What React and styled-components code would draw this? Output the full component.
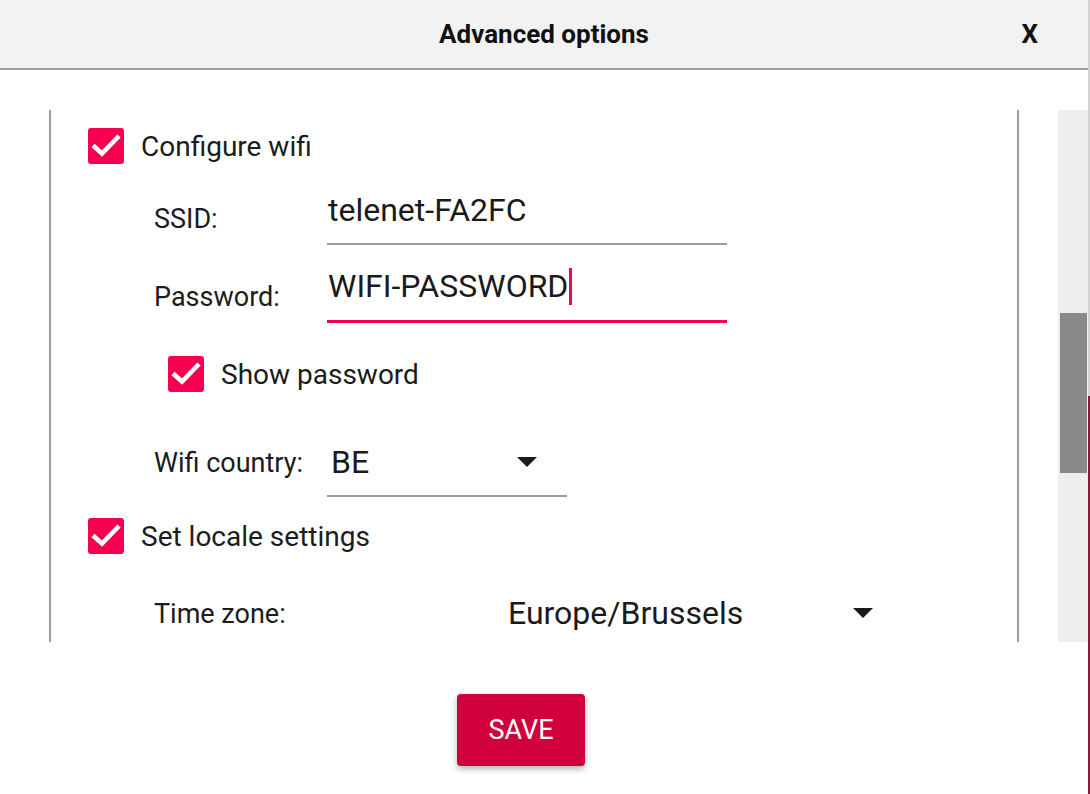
import React from "react";
import styled, { createGlobalStyle } from "styled-components";

const GlobalStyle = createGlobalStyle`
  html, body {
    margin: 0;
    padding: 0;
    background: #ffffff;
  }
  body {
    font-family: Roboto, "Noto Sans", sans-serif;
    color: #1c1c1c;
  }
`;

const Screen = styled.div`
  display: flex;
  width: 1090px;
  height: 794px;
  overflow: hidden;
`;

const Dialog = styled.div`
  display: flex;
  flex-direction: column;
  width: 1088px;
  height: 794px;
  background: #ffffff;
`;

const EdgeStrip = styled.div`
  width: 2px;
  background: linear-gradient(#d4d4d4 0 396px, #8c1a3c 396px 100%);
`;

const Header = styled.header`
  display: grid;
  grid-template-columns: 1fr auto 1fr;
  align-items: center;
  height: 68px;
  background: #f2f2f2;
  border-bottom: 2px solid #a2a2a2;
  font-weight: 700;
  font-size: 26px;
  color: #111;
`;

const Title = styled.div`
  grid-column: 2;
`;

const CloseX = styled.div`
  justify-self: end;
  margin-right: 50px;
`;

const Body = styled.div`
  display: flex;
  align-items: flex-start;
  padding-top: 40px;
`;

const Panel = styled.div`
  margin-left: 49px;
  width: 966px;
  height: 532px;
  border-left: 2px solid #9c9c9c;
  border-right: 2px solid #9c9c9c;
  overflow: hidden;
  display: flex;
  flex-direction: column;
`;

const ScrollTrack = styled.div`
  margin-left: 39px;
  width: 30px;
  height: 532px;
  background: #eeeeee;
  display: flex;
  flex-direction: column;
  align-items: center;
  padding-top: 203px;
  box-sizing: border-box;
`;

const ScrollThumb = styled.div`
  width: 27px;
  height: 160px;
  background: #8a8a8a;
`;

const CheckRow = styled.label`
  display: flex;
  align-items: center;
  gap: 17px;
  margin-top: ${(p) => p.top}px;
  padding-left: ${(p) => p.indent}px;
  font-size: 28px;
  height: 36px;
`;

const Box = styled.span`
  width: 36px;
  height: 36px;
  border-radius: 3px;
  background: #f5004f;
  display: flex;
  align-items: center;
  justify-content: center;
  flex-shrink: 0;
`;

const FieldRow = styled.div`
  display: flex;
  align-items: center;
  margin-top: ${(p) => p.top}px;
  padding-left: 103px;
`;

const Label = styled.span`
  width: ${(p) => p.width}px;
  font-size: 27px;
  flex-shrink: 0;
`;

const TextInput = styled.div`
  display: flex;
  align-items: center;
  width: 400px;
  height: 52px;
  box-sizing: border-box;
  padding: 0 0 ${(p) => (p.focused ? 19 : 17)}px 1px;
  border-bottom: ${(p) => (p.focused ? "3px solid #f5004f" : "2px solid #9e9e9e")};
  font-size: 32px;
  color: #1a1a1a;
`;

const Caret = styled.span`
  display: inline-block;
  width: 3px;
  height: 37px;
  margin-left: 1px;
  background: #f5004f;
`;

const Select = styled.div`
  display: flex;
  align-items: center;
  justify-content: space-between;
  width: ${(p) => p.width}px;
  height: 69px;
  box-sizing: border-box;
  padding: 0 30px 0 ${(p) => p.padLeft}px;
  border-bottom: ${(p) => (p.underline ? "2px solid #9e9e9e" : "none")};
  font-size: 32px;
  color: #1a1a1a;
  flex-shrink: 0;
`;

const Footer = styled.div`
  display: flex;
  justify-content: center;
  padding-right: 46px;
  padding-top: 52px;
`;

const SaveButton = styled.button`
  width: 128px;
  height: 72px;
  border: none;
  border-radius: 4px;
  background: #cf003d;
  color: #ffffff;
  font-family: Roboto, sans-serif;
  font-size: 27px;
  box-shadow: 0 3px 6px rgba(0, 0, 0, 0.3);
  cursor: pointer;
`;

const Tick = () => (
  <svg width="36" height="36" viewBox="0 0 36 36">
    <path d="M5 17.5 L14 25.5 L31 8" fill="none" stroke="#fff" strokeWidth="4.6" />
  </svg>
);

const Arrow = () => (
  <svg width="20" height="10" viewBox="0 0 20 10">
    <path d="M0 0 H20 L10 10 Z" fill="#1a1a1a" />
  </svg>
);

const Checkbox = ({ top, indent, children }) => (
  <CheckRow top={top} indent={indent}>
    <Box>
      <Tick />
    </Box>
    {children}
  </CheckRow>
);

export default function App() {
  return (
    <>
      <GlobalStyle />
      <Screen>
        <Dialog>
          <Header>
            <Title>Advanced options</Title>
            <CloseX>X</CloseX>
          </Header>
          <Body>
            <Panel>
              <Checkbox top={18} indent={37}>
                Configure wifi
              </Checkbox>
              <FieldRow top={29}>
                <Label width={173}>SSID:</Label>
                <TextInput>telenet-FA2FC</TextInput>
              </FieldRow>
              <FieldRow top={26}>
                <Label width={173}>Password:</Label>
                <TextInput focused>
                  WIFI-PASSWORD
                  <Caret />
                </TextInput>
              </FieldRow>
              <Checkbox top={33} indent={117}>
                Show password
              </Checkbox>
              <FieldRow top={36}>
                <Label width={173}>Wifi country:</Label>
                <Select width={240} padLeft={4} underline>
                  BE
                  <Arrow />
                </Select>
              </FieldRow>
              <Checkbox top={21} indent={37}>
                Set locale settings
              </Checkbox>
              <FieldRow top={25}>
                <Label width={354}>Time zone:</Label>
                <Select width={395} padLeft={0} underline>
                  Europe/Brussels
                  <Arrow />
                </Select>
              </FieldRow>
            </Panel>
            <ScrollTrack>
              <ScrollThumb />
            </ScrollTrack>
          </Body>
          <Footer>
            <SaveButton>SAVE</SaveButton>
          </Footer>
        </Dialog>
        <EdgeStrip />
      </Screen>
    </>
  );
}
